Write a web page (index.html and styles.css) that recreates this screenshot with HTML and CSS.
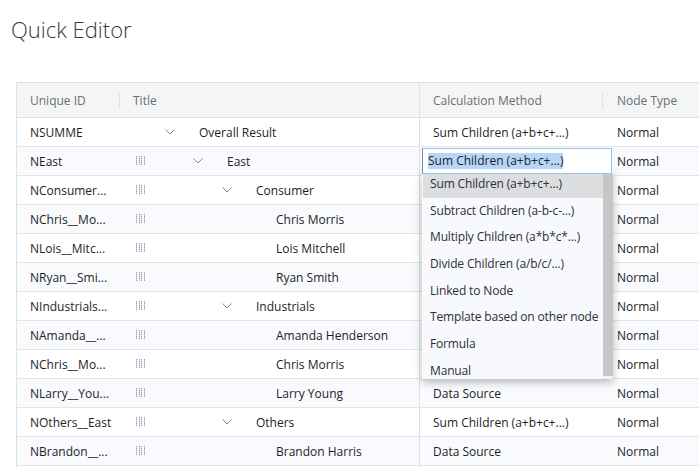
FILE: index.html
```html
<!DOCTYPE html>
<html>
<head>
<meta charset="utf-8">
<link rel="stylesheet" href="styles.css">
</head>
<body>
<h1 class="title">Quick Editor</h1>
<div class="grid">
  <div class="row head">
    <div class="cell c-id"><span>Unique ID</span><i class="sep"></i></div>
    <div class="cell c-title"><span>Title</span></div>
    <div class="cell c-calc"><span>Calculation Method</span><i class="sep"></i></div>
    <div class="cell c-type"><span>Node Type</span></div>
  </div>

  <div class="row">
    <div class="cell c-id">NSUMME</div>
    <div class="cell c-title"><span class="handle hidden"></span><span class="node l0"><span class="chev"></span>Overall Result</span></div>
    <div class="cell c-calc">Sum Children (a+b+c+...)</div>
    <div class="cell c-type">Normal</div>
  </div>

  <div class="row alt">
    <div class="cell c-id">NEast</div>
    <div class="cell c-title"><span class="handle"></span><span class="node l1"><span class="chev"></span>East</span></div>
    <div class="cell c-calc editing">
      <div class="combo">
        <div class="combo-input"><span class="sel">Sum Children (a+b+c+...)</span></div>
        <div class="combo-list">
          <ul class="options">
            <li class="active">Sum Children (a+b+c+...)</li>
            <li>Subtract Children (a-b-c-...)</li>
            <li>Multiply Children (a*b*c*...)</li>
            <li>Divide Children (a/b/c/...)</li>
            <li>Linked to Node</li>
            <li>Template based on other node</li>
            <li>Formula</li>
            <li>Manual</li>
          </ul>
          <div class="scrollbar"><div class="thumb"></div></div>
        </div>
      </div>
    </div>
    <div class="cell c-type">Normal</div>
  </div>

  <div class="row">
    <div class="cell c-id">NConsumer...</div>
    <div class="cell c-title"><span class="handle"></span><span class="node l2"><span class="chev"></span>Consumer</span></div>
    <div class="cell c-calc covered"></div>
    <div class="cell c-type">Normal</div>
  </div>

  <div class="row alt">
    <div class="cell c-id">NChris__Mo...</div>
    <div class="cell c-title"><span class="handle"></span><span class="node leaf">Chris Morris</span></div>
    <div class="cell c-calc covered"></div>
    <div class="cell c-type">Normal</div>
  </div>

  <div class="row">
    <div class="cell c-id">NLois__Mitc...</div>
    <div class="cell c-title"><span class="handle"></span><span class="node leaf">Lois Mitchell</span></div>
    <div class="cell c-calc covered"></div>
    <div class="cell c-type">Normal</div>
  </div>

  <div class="row alt">
    <div class="cell c-id">NRyan__Smi...</div>
    <div class="cell c-title"><span class="handle"></span><span class="node leaf">Ryan Smith</span></div>
    <div class="cell c-calc covered"></div>
    <div class="cell c-type">Normal</div>
  </div>

  <div class="row">
    <div class="cell c-id">NIndustrials...</div>
    <div class="cell c-title"><span class="handle"></span><span class="node l2"><span class="chev"></span>Industrials</span></div>
    <div class="cell c-calc covered"></div>
    <div class="cell c-type">Normal</div>
  </div>

  <div class="row alt">
    <div class="cell c-id">NAmanda__...</div>
    <div class="cell c-title"><span class="handle"></span><span class="node leaf">Amanda Henderson</span></div>
    <div class="cell c-calc covered"></div>
    <div class="cell c-type">Normal</div>
  </div>

  <div class="row">
    <div class="cell c-id">NChris__Mo...</div>
    <div class="cell c-title"><span class="handle"></span><span class="node leaf">Chris Morris</span></div>
    <div class="cell c-calc covered"></div>
    <div class="cell c-type">Normal</div>
  </div>

  <div class="row alt">
    <div class="cell c-id">NLarry__You...</div>
    <div class="cell c-title"><span class="handle"></span><span class="node leaf">Larry Young</span></div>
    <div class="cell c-calc">Data Source</div>
    <div class="cell c-type">Normal</div>
  </div>

  <div class="row">
    <div class="cell c-id">NOthers__East</div>
    <div class="cell c-title"><span class="handle"></span><span class="node l2"><span class="chev"></span>Others</span></div>
    <div class="cell c-calc">Sum Children (a+b+c+...)</div>
    <div class="cell c-type">Normal</div>
  </div>

  <div class="row alt">
    <div class="cell c-id">NBrandon__...</div>
    <div class="cell c-title"><span class="handle"></span><span class="node leaf">Brandon Harris</span></div>
    <div class="cell c-calc">Data Source</div>
    <div class="cell c-type">Normal</div>
  </div>

  <div class="row">
    <div class="cell c-id"></div>
    <div class="cell c-title"></div>
    <div class="cell c-calc"></div>
    <div class="cell c-type"></div>
  </div>
</div>
</body>
</html>
```

FILE: styles.css
```css
html, body {
  margin: 0;
  padding: 0;
  background: #ffffff;
  overflow: hidden;
  width: 699px;
  height: 468px;
}
body {
  font-family: "Open Sans", "Noto Sans", sans-serif;
  font-size: 12px;
  color: #1e1e1e;
}
.title {
  margin: 0;
  padding: 14px 0 0 11px;
  height: 82px;
  box-sizing: border-box;
  font-weight: 300;
  font-size: 22px;
  line-height: 30px;
  color: #3a3a3a;
}
.grid {
  margin-left: 16px;
  width: 720px;
  border-left: 1px solid #dfe0e1;
  border-top: 1px solid #dfe0e1;
}
.row {
  display: grid;
  grid-template-columns: 103px 300px 183px 134px;
  height: 29px;
  border-bottom: 1px solid #e3e4e6;
  box-sizing: border-box;
  background: #ffffff;
}
.row.alt { background: #f9fafd; }
.row.head {
  height: 35px;
  background: #f4f5f5;
  color: #6b6e76;
  border-bottom: 1px solid #dfe0e1;
}
.cell {
  position: relative;
  display: flex;
  align-items: center;
  white-space: nowrap;
  overflow: visible;
}
.c-id { padding-left: 13px; }
.c-title { border-right: 1px solid #dfe0e1; box-sizing: border-box; }
.head .c-title { padding-left: 13px; }
.c-calc { padding-left: 13px; }
.c-type { padding-left: 14px; }
.sep {
  position: absolute;
  right: 0;
  top: 10px;
  width: 1px;
  height: 16px;
  background: #dfe0e1;
}
.handle {
  margin-left: 16px;
  width: 10px;
  height: 9px;
  flex: none;
  background-image: url("data:image/svg+xml;utf8,<svg xmlns='http://www.w3.org/2000/svg' width='10' height='9' shape-rendering='crispEdges'><g fill='%239c9cbc'><rect x='0' y='0' width='1' height='1'/><rect x='0' y='2' width='1' height='1'/><rect x='0' y='4' width='1' height='1'/><rect x='0' y='6' width='1' height='1'/><rect x='0' y='8' width='1' height='1'/><rect x='3' y='0' width='1' height='1'/><rect x='3' y='2' width='1' height='1'/><rect x='3' y='4' width='1' height='1'/><rect x='3' y='6' width='1' height='1'/><rect x='3' y='8' width='1' height='1'/><rect x='5' y='0' width='1' height='1'/><rect x='5' y='2' width='1' height='1'/><rect x='5' y='4' width='1' height='1'/><rect x='5' y='6' width='1' height='1'/><rect x='5' y='8' width='1' height='1'/><rect x='8' y='0' width='1' height='1'/><rect x='8' y='2' width='1' height='1'/><rect x='8' y='4' width='1' height='1'/><rect x='8' y='6' width='1' height='1'/><rect x='8' y='8' width='1' height='1'/></g><g fill='%23d0d0e2'><rect x='0' y='1' width='1' height='1'/><rect x='0' y='3' width='1' height='1'/><rect x='0' y='5' width='1' height='1'/><rect x='0' y='7' width='1' height='1'/><rect x='3' y='1' width='1' height='1'/><rect x='3' y='3' width='1' height='1'/><rect x='3' y='5' width='1' height='1'/><rect x='3' y='7' width='1' height='1'/><rect x='5' y='1' width='1' height='1'/><rect x='5' y='3' width='1' height='1'/><rect x='5' y='5' width='1' height='1'/><rect x='5' y='7' width='1' height='1'/><rect x='8' y='1' width='1' height='1'/><rect x='8' y='3' width='1' height='1'/><rect x='8' y='5' width='1' height='1'/><rect x='8' y='7' width='1' height='1'/></g></svg>");
  background-repeat: no-repeat;
  position: relative;
  top: -1px;
}
.handle.hidden { visibility: hidden; }
.node {
  display: flex;
  align-items: center;
}
.node.l0 { margin-left: 19px; }
.node.l1 { margin-left: 47px; }
.node.l2 { margin-left: 76px; }
.node.leaf { margin-left: 130px; }
.chev {
  width: 34px;
  height: 6px;
  flex: none;
  background-image: url("data:image/svg+xml;utf8,<svg xmlns='http://www.w3.org/2000/svg' width='10' height='6'><polyline points='0.5,0.5 5,5 9.5,0.5' fill='none' stroke='%23878a92' stroke-width='1'/></svg>");
  background-repeat: no-repeat;
  background-position: 0 0;
}
.editing { padding-left: 0; }
.combo {
  position: absolute;
  left: 2px;
  top: 1px;
  width: 191px;
  z-index: 5;
}
.combo-input {
  position: relative;
  z-index: 2;
  width: 190px;
  height: 26px;
  box-sizing: border-box;
  border: 1px solid #9cc2ec;
  border-left-color: #6f8fb6;
  background: #ffffff;
  display: flex;
  align-items: center;
  padding-left: 5px;
}
.sel {
  background: #b5d6f8;
  line-height: 16px;
}
.combo-list {
  position: relative;
  z-index: 1;
  margin-top: -3px;
  height: 208px;
  width: 191px;
  background: #f8f9fc;
  display: flex;
  overflow: hidden;
  box-shadow: 0 3px 8px rgba(0, 0, 0, 0.28);
}
.options {
  list-style: none;
  margin: 0;
  padding: 0 0 0 1px;
  width: 181px;
  color: #2a2f3a;
  letter-spacing: -0.15px;
}
.options li {
  height: 26.7px;
  line-height: 26.7px;
  padding-left: 7px;
  white-space: nowrap;
}
.options li.active {
  background: #dcdddf;
}
.scrollbar {
  width: 10px;
  display: flex;
  flex-direction: column;
  padding-top: 3px;
  background: #f0f0f0;
}
.thumb {
  height: 202px;
  background: #c6c6c6;
}
```
